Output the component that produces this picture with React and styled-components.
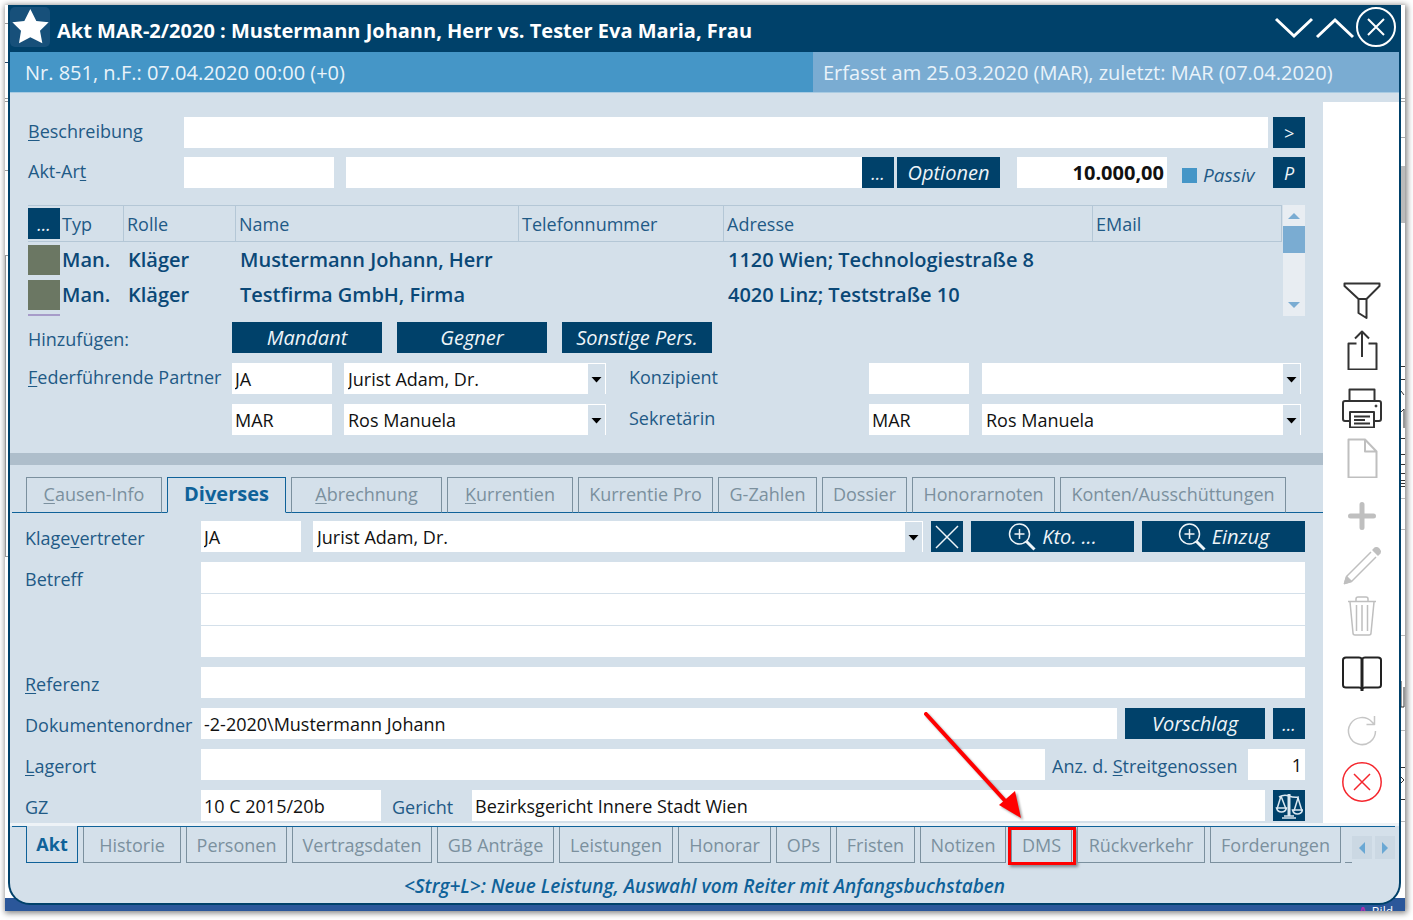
import React from "react";
import styled, { createGlobalStyle, css } from "styled-components";

const navy = "#00416a";
const panel = "#d4e0ea";
const blue = "#0f6299";
const text = "#1f5a86";
const muted = "#7b909e";

const GlobalStyle = createGlobalStyle`
    * {
        box-sizing: border-box;
    }
    body {
        margin: 0;
        background: #fff;
        font-family: "Open Sans", "Noto Sans", sans-serif;
        font-size: 18px;
        color: ${text};
    }
    button, input, select {
        font: inherit;
        margin: 0;
        border: 0;
        border-radius: 0;
        outline: 0;
    }
    u {
        text-underline-offset: 2px;
        text-decoration-thickness: 1px;
    }
`;

/* Desktop and window frame */
const Desktop = styled.div`
    padding: 5px 8px 9px 5px;
`;
const Sheet = styled.div`
    position: relative;
    padding: 0 4px 0 3px;
    background: linear-gradient(to top, #2b579a 13px, #fff 13px);
    box-shadow: 1px 1px 6px 1px rgba(0, 0, 0, 0.5);
`;
const EdgeArt = styled.svg`
    position: absolute;
    top: 0;
    right: 0;
`;
const EdgeArtLeft = styled(EdgeArt)`
    right: auto;
    left: 0;
`;
const Taskbar = styled.div`
    display: flex;
    justify-content: flex-end;
    gap: 5px;
    height: 6px;
    padding-right: 8px;
    overflow: hidden;
    font-size: 12px;
    line-height: 14px;
    color: #fff;
    b {
        color: #b02fb0;
    }
`;
const Window = styled.main`
    position: relative;
    border: 2px solid ${navy};
    border-top: 0;
    border-radius: 0 0 22px 22px;
    background: ${panel};
`;
const TitleBar = styled.header`
    display: flex;
    align-items: center;
    height: 47px;
    padding-right: 3px;
    background: ${navy};
`;
const StarTile = styled.div`
    display: flex;
    width: 40px;
    height: 40px;
    margin-bottom: 3px;
    border-radius: 5px;
    background: #17507a;
`;
const Title = styled.h1`
    flex: 1;
    margin: 0;
    padding: 4px 0 0 7px;
    font-size: 20px;
    font-weight: 700;
    line-height: 26px;
    color: #fff;
`;
const TitleButton = styled.button`
    display: flex;
    padding: 0;
    margin-bottom: 3px;
    background: none;
`;
const InfoBar = styled.div`
    display: flex;
    height: 41px;
    line-height: 42px;
    font-size: 20px;
    color: #e9f3fa;
    border-bottom: 1px solid #a9cbe2;
`;
const InfoLeft = styled.div`
    flex: 1;
    padding-left: 15px;
    background: #4596c7;
`;
const InfoRight = styled.div`
    width: 586px;
    padding-left: 10px;
    background: #7aacd2;
`;
const Body = styled.div`
    display: flex;
    border-bottom: 3px solid #eef3f7;
`;
const Content = styled.div`
    flex: 1;
    min-width: 0;
    padding-bottom: 2px;
`;

/* Form parts */
const TopForm = styled.section`
    padding: 24px 18px 18px 18px;
`;
const Fields = styled.div`
    display: flex;
    flex-direction: column;
    gap: ${p => p.$gap || 9}px;
`;
const Row = styled.div`
    display: flex;
    align-items: ${p => (p.$top ? "flex-start" : "center")};
    height: ${p => (p.$top ? "auto" : "31px")};
`;
const Label = styled.label`
    flex: none;
    width: ${p => (p.$w ? p.$w + "px" : "auto")};
    padding-bottom: ${p => (p.$low ? 0 : 3)}px;
    padding-top: ${p => (p.$low ? 3 : 0)}px;
    line-height: 28px;
    white-space: nowrap;
`;
const Indent = styled.span`
    display: inline-block;
    width: ${p => p.$w}px;
`;
const EndSpace = styled.span`
    width: 4px;
`;
const Field = styled.input`
    flex: ${p => (p.$w ? "none" : "1")};
    min-width: 0;
    width: ${p => (p.$w ? p.$w + "px" : "auto")};
    height: 31px;
    margin-left: ${p => p.$ml || 0}px;
    padding: 0 3px;
    background: #fff;
    color: #111;
    text-align: ${p => p.$align || "left"};
    font-weight: ${p => (p.$bold ? 700 : 400)};
    font-size: ${p => (p.$bold ? 20 : 18)}px;
`;
const Lines = styled.div`
    flex: 1;
    display: flex;
    flex-direction: column;
    gap: 1px;
    ${Field} {
        flex: none;
        width: 100%;
    }
`;
const Button = styled.button`
    display: flex;
    flex: none;
    align-items: center;
    justify-content: center;
    gap: 6px;
    width: ${p => p.$w || 32}px;
    height: 31px;
    margin-left: ${p => p.$ml || 0}px;
    padding: 0;
    background: ${navy};
    color: #eef4f8;
    font-size: ${p => (p.$w ? 20 : 18)}px;
    font-style: italic;
    line-height: 28px;
`;
const CheckLabel = styled.label`
    display: flex;
    align-items: center;
    width: 106px;
    padding: 5px 0 0 15px;
    font-size: 19px;
    font-style: italic;
    input {
        appearance: none;
        width: 15px;
        height: 15px;
        margin-right: 6px;
        background: #4596c7;
    }
`;
const SelectWrap = styled.div`
    position: relative;
    display: flex;
    flex: ${p => (p.$w ? "none" : "1")};
    width: ${p => (p.$w ? p.$w + "px" : "auto")};
    height: 31px;
    margin-left: ${p => p.$ml || 0}px;
    background: #fff;
    select {
        appearance: none;
        flex: 1;
        min-width: 0;
        padding: 0 20px 0 4px;
        background: none;
        color: #111;
    }
    svg {
        position: absolute;
        top: 1px;
        right: 1px;
        background: ${panel};
        pointer-events: none;
    }
`;

/* Persons table */
const TableArea = styled.div`
    display: flex;
    align-items: flex-start;
    justify-content: space-between;
    height: 111px;
    margin: 17px 0 6px;
    overflow: hidden;
`;
const Table = styled.table`
    flex: 1;
    table-layout: fixed;
    border-collapse: separate;
    border-spacing: 0;
    th {
        height: 37px;
        padding: 0 0 0 3px;
        border: 1px solid #b4c7d6;
        border-left-width: 0;
        font-weight: 400;
        text-align: left;
        line-height: 24px;
    }
    th:first-child {
        padding: 0;
    }
    td {
        height: 35px;
        padding: 0 0 0 4px;
        font-size: 20px;
        font-weight: 600;
        color: #0a4877;
        white-space: nowrap;
        line-height: 24px;
    }
    td:first-child {
        padding: 0;
    }
    tr:last-child td {
        padding-top: 2px;
        vertical-align: top;
    }
`;
const TypeCell = styled.div`
    display: flex;
    align-items: center;
    gap: 2px;
`;
const Swatch = styled.span`
    flex: none;
    width: 32px;
    height: 30px;
    background: #6b7763;
`;
const NextRow = styled.div`
    width: 32px;
    height: 2px;
    background: #a79cc9;
`;
const Scroll = styled.div`
    display: flex;
    flex-direction: column;
    width: 22px;
    height: 111px;
    margin-left: 1px;
    background: #e8edf2;
`;
const ScrollButton = styled.button`
    display: flex;
    height: 21px;
    padding: 0;
    background: none;
`;
const Thumb = styled.div`
    height: 27px;
    margin-bottom: auto;
    background: #7aacd2;
`;
const Splitter = styled.div`
    height: 12px;
    background: #aebecb;
`;

/* Tabs */
const tabLine = css`
    content: "";
    height: 1px;
    background: ${blue};
`;
const UpperTabs = styled.nav`
    display: flex;
    align-items: flex-end;
    margin: 12px 0 0 2px;
    &::before {
        ${tabLine}
        width: 14px;
    }
    &::after {
        ${tabLine}
        flex: 1;
    }
`;
const UpperTab = styled.button`
    flex: none;
    width: ${p => p.$w}px;
    height: 36px;
    padding: 0 0 2px;
    background: none;
    border: 1px solid ${p => (p.$active ? blue : muted)};
    border-bottom-color: ${p => (p.$active ? "transparent" : blue)};
    color: ${p => (p.$active ? blue : muted)};
    font-size: ${p => (p.$active ? 20 : 18)}px;
    font-weight: ${p => (p.$active ? 700 : 400)};
    line-height: 30px;
    white-space: nowrap;
`;
const TabGap = styled.span`
    width: 5px;
    height: 1px;
    background: ${blue};
`;
const Details = styled.section`
    padding: 8px 18px 0 15px;
`;
const LowerTabs = styled.nav`
    display: flex;
    height: 38px;
    margin: 0 4px 0 2px;
    padding-left: 14px;
    gap: 5px;
    border-top: 1px solid ${blue};
`;
const LowerTab = styled.button`
    position: relative;
    flex: none;
    width: ${p => p.$w}px;
    height: ${p => (p.$active ? 37 : 36)}px;
    margin-top: ${p => (p.$active ? -1 : 0)}px;
    padding: 0;
    background: ${panel};
    border: 1px solid ${p => (p.$active ? blue : muted)};
    border-top: 0;
    color: ${p => (p.$active ? blue : muted)};
    font-weight: ${p => (p.$active ? 700 : 400)};
    line-height: 30px;
    white-space: nowrap;
`;
const NextTab = styled.span`
    flex: 1;
    height: 36px;
    margin-left: -1px;
    border-bottom: 1px solid ${muted};
`;
const TabScroll = styled.button`
    display: flex;
    width: 20px;
    height: 23px;
    margin-top: 9px;
    margin-left: ${p => (p.$first ? -5 : -2)}px;
    padding: 0;
    background: #cbd8e3;
`;
const Hint = styled.footer`
    height: 39px;
    padding-top: 8px;
    text-align: center;
    font-style: italic;
    font-weight: 600;
    font-size: 19px;
    line-height: 28px;
    color: ${blue};
`;
const Marker = styled.span`
    position: absolute;
    inset: 0 -5px -3px -4px;
    border: 3px solid #f00;
    box-shadow: 2px 2px 3px rgba(0, 0, 0, 0.4);
    pointer-events: none;
`;
const Arrow = styled.svg`
    position: absolute;
    right: 45px;
    bottom: 37px;
    pointer-events: none;
    filter: drop-shadow(2px 2px 1px rgba(0, 0, 0, 0.35));
`;

/* Toolbar on the right */
const Toolbar = styled.aside`
    display: flex;
    flex-direction: column;
    justify-content: flex-end;
    gap: 8px;
    width: 76px;
    margin-top: 9px;
    padding: 0 0 16px 2px;
    background: #fff;
`;
const Tool = styled.button`
    display: flex;
    align-items: center;
    justify-content: center;
    width: 100%;
    height: 50px;
    padding: 0;
    background: none;
    color: ${p => p.$color || "#333"};
`;

const Icon = ({ size = 40, width = 2, children }) => (
    <svg width={size} height={size} viewBox="0 0 40 40" fill="none" stroke="currentColor"
        strokeWidth={width} strokeLinejoin="round" aria-hidden="true">
        {children}
    </svg>
);

const grey = "#bfbfbf";
const tools = [
    [
        { name: "Filter", icon: <path d="M2.5 3.5h35v2.5L24.500 19v19l-8-5V19L2.500 6zM16.500 19h8" /> },
        { name: "Exportieren", icon: <path d="M14.500 13.500h-8v26h28v-26h-8M20 27V2M13 8.500l7-7 7 7" /> }
    ],
    [
        {
            name: "Drucken", icon: <>
                <path d="M7.500 13V1.500h25V13M8 33H3a2 2 0 0 1-2-2V15a2 2 0 0 1 2-2h34a2 2 0 0 1 2 2v16a2 2 0 0 1-2 2h-5" />
                <path d="M8 24h24v15.500H8zM12 28.500h16M12 32h11M12 35.500h16" />
                <circle cx="34" cy="18" r="1" fill="currentColor" strokeWidth="1" />
            </>
        },
        { name: "Neues Dokument", color: grey, icon: <path d="M6.500 1.500h16.500l11.500 12v26h-28zM23 1.500v12h11.500" /> }
    ],
    [
        { name: "Hinzufügen", color: grey, width: 5, icon: <path d="M20 8.500v23M8.500 20h23" strokeLinecap="round" /> },
        {
            name: "Bearbeiten", color: grey, width: 1.5, icon: <>
                <path d="M29 6L5 30 2.500 37.500 10 35 34 11" />
                <path d="M31 4l2-2c3-1 6 2 5 5l-2 2zM2.500 37.500l2-7 5 5z" fill="currentColor" />
            </>
        },
        {
            name: "Löschen", color: grey, width: 1.5, icon: <>
                <path d="M6 5.500h28M14 5V3q0-2 2-2h8q2 0 2 2v2M8 6l3 31q0 2 2 2h14q2 0 2-2l3-31" />
                <path d="M14.500 9v26M20 9v26M25.500 9v26" />
            </>
        }
    ],
    [
        {
            name: "Akt öffnen", color: "#222", icon: <>
                <path d="M20 5q-1-1.500-3-1.500H4Q1 3.500 1 6v25q0 2.500 3 2.500h13q2 0 3 1.500 1-1.500 3-1.500h13q3 0 3-2.500V6q0-2.500-3-2.500H23q-2 0-3 1.500z" />
                <path d="M20 5v32" strokeWidth="3" />
            </>
        }
    ],
    [
        { name: "Aktualisieren", color: "#c6c6c6", width: 1.5, icon: <path d="M33.500 19A13.500 13.500 0 1 1 30 10l2.500 2.500M32.500 4v8.500H24.500" /> },
        { name: "Schließen", color: "#f5262d", width: 1.5, icon: <path d="M20 .8a19.200 19.200 0 1 1 0 38.400 19.200 19.200 0 0 1 0-38.400M12 12l16 16M28 12L12 28" /> }
    ]
];

const upperTabs = [
    [136, <><u>C</u>ausen-Info</>],
    [119, <>Di<u>v</u>erses</>],
    [151, <><u>A</u>brechnung</>],
    [126, <><u>K</u>urrentien</>],
    [135, "Kurrentie Pro"],
    [99, "G-Zahlen"],
    [85, "Dossier"],
    [143, "Honorarnoten"],
    [226, "Konten/Ausschüttungen"]
];
const lowerTabs = [
    [52, "Akt"], [98, "Historie"], [101, "Personen"], [140, "Vertragsdaten"],
    [117, "GB Anträge"], [114, "Leistungen"], [93, "Honorar"], [55, "OPs"],
    [79, "Fristen"], [86, "Notizen"], [61, "DMS"], [128, "Rückverkehr"], [131, "Forderungen"]
];
const persons = [
    ["Man.", "Kläger", "Mustermann Johann, Herr", "", "1120 Wien; Technologiestraße 8", ""],
    ["Man.", "Kläger", "Testfirma GmbH, Firma", "", "4020 Linz; Teststraße 10", ""]
];

const Select = ({ w, ml, value, ...rest }) => (
    <SelectWrap $w={w} $ml={ml}>
        <select defaultValue={value} {...rest}>
            <option>{value}</option>
        </select>
        <svg width="17" height="30" viewBox="0 0 17 30" aria-hidden="true">
            <path d="M3.500 13h10l-5 5.500z" fill="#000" />
        </svg>
    </SelectWrap>
);

const Lens = () => (
    <svg width="28" height="29" viewBox="0 0 28 29" fill="none" stroke="#eef4f8" aria-hidden="true">
        <circle cx="11.500" cy="12" r="10" strokeWidth="1.500" />
        <path d="M11.500 7v10M6.500 12h10" strokeWidth="1.500" />
        <path d="M18.500 19.500l8 8" strokeWidth="3" />
    </svg>
);

const Scales = () => (
    <svg width="28" height="28" viewBox="0 0 28 28" fill="none" stroke="#dbe8f1" strokeWidth="1.500" aria-hidden="true">
        <path d="M4 5q5-3 10-1 5 2 10 1M6 4L2 17M6 4l5 13M23 6l-4 13M23 6l4 13M7 26h14M9 24h10" />
        <path d="M1.500 16h10q-1 4-5 4t-5-4zM17.500 18h10q-1 4-5 4t-5-4z" />
        <path d="M14 2v22" strokeWidth="3" />
    </svg>
);

const App = function App() {
    return <Desktop>
        <GlobalStyle />
        <Sheet>
            <EdgeArtLeft width="3" height="620" fill="none" stroke="#999" aria-hidden="true">
                <path d="M0 18.500h3M0 93.500h3M0 96.500h3M0 165.500h3M0 250.500h3M.5 250v302M0 551.500h3" />
                <path d="M0 57.500h3" stroke="#246" />
            </EdgeArtLeft>
            <EdgeArt width="4" height="880" fill="none" stroke="#333" aria-hidden="true">
                <path d="M0 93.500h4M0 96.500h4M0 132.500h4" stroke="#aaa" />
                <path d="M0 161h4v57H0z" fill="#bbb" stroke="none" />
                <path d="M0 361.500h4M0 374.500h4M0 386l3 4M0 407l3-3v19M0 433.500h4M0 449.500h4M0 459.500h4M0 468.500h4M0 475.500h4M0 478.500h4M0 481.500h4M0 676v26h3v-20M0 762.500h4M0 778l3-3-3-3M0 794.500h4" />
                <path d="M0 493.500h4M0 524.500h4M0 630.500h4M0 725.500h4M0 816.500h4" stroke="#bbb" />
            </EdgeArt>
            <Window>
                <TitleBar>
                    <StarTile>
                        <svg width="40" height="40" viewBox="0 0 120 120" aria-hidden="true">
                            <path d="M61 6l18 36 37 4-26 25 7 38-36-18-34 18 6-38L7 46l36-4z" fill="#fff" />
                        </svg>
                    </StarTile>
                    <Title>Akt MAR-2/2020 : Mustermann Johann, Herr vs. Tester Eva Maria, Frau</Title>
                    <TitleButton aria-label="Nach unten">
                        <svg width="41" height="40" fill="none" stroke="#fff" strokeWidth="3"><path d="M2 12l18 17 18-17" /></svg>
                    </TitleButton>
                    <TitleButton aria-label="Nach oben">
                        <svg width="41" height="40" fill="none" stroke="#fff" strokeWidth="3"><path d="M2 30l18-17 18 17" /></svg>
                    </TitleButton>
                    <TitleButton aria-label="Schließen">
                        <svg width="40" height="40" fill="none" stroke="#fff" strokeWidth="2">
                            <circle cx="20" cy="20" r="19" />
                            <path d="M12 12l16 16M28 12L12 28" />
                        </svg>
                    </TitleButton>
                </TitleBar>
                <InfoBar>
                    <InfoLeft>Nr. 851, n.F.: 07.04.2020 00:00 (+0)</InfoLeft>
                    <InfoRight>Erfasst am 25.03.2020 (MAR), zuletzt: MAR (07.04.2020)</InfoRight>
                </InfoBar>
                <Body>
                    <Content>
                        <TopForm>
                            <Fields>
                                <Row>
                                    <Label htmlFor="desc" $w={156}><u>B</u>eschreibung</Label>
                                    <Field id="desc" />
                                    <Button $ml={5}>&gt;</Button>
                                </Row>
                                <Row>
                                    <Label htmlFor="kind" $w={156}>Akt-Ar<u>t</u></Label>
                                    <Field id="kind" $w={150} />
                                    <Field aria-label="Akt-Art Bezeichnung" $ml={12} />
                                    <Button>...</Button>
                                    <Button $w={103} $ml={3}>Optionen</Button>
                                    <Field aria-label="Streitwert" $w={150} $ml={17} $align="right" $bold defaultValue="10.000,00" />
                                    <CheckLabel><input type="checkbox" />Passiv</CheckLabel>
                                    <Button>P</Button>
                                </Row>
                            </Fields>
                            <TableArea>
                                <Table>
                                    <colgroup>
                                        <col style={{ width: 96 }} />
                                        <col style={{ width: 112 }} />
                                        <col style={{ width: 283 }} />
                                        <col style={{ width: 205 }} />
                                        <col />
                                        <col style={{ width: 189 }} />
                                    </colgroup>
                                    <thead>
                                        <tr>
                                            <th><TypeCell><Button aria-label="Spalten">...</Button>Typ</TypeCell></th>
                                            <th>Rolle</th>
                                            <th>Name</th>
                                            <th>Telefonnummer</th>
                                            <th>Adresse</th>
                                            <th>EMail</th>
                                        </tr>
                                    </thead>
                                    <tbody>
                                        {persons.map((row, i) => <tr key={i}>
                                            {row.map((cell, j) => <td key={j}>
                                                {j === 0 ? <TypeCell><Swatch />{cell}</TypeCell> : cell}
                                            </td>)}
                                        </tr>)}
                                        <tr><td colSpan="6"><NextRow /></td></tr>
                                    </tbody>
                                </Table>
                                <Scroll>
                                    <ScrollButton aria-label="Hinauf">
                                        <svg width="22" height="21"><path d="M5 14l6-6 6 6z" fill="#7aacd2" /></svg>
                                    </ScrollButton>
                                    <Thumb />
                                    <ScrollButton aria-label="Hinunter">
                                        <svg width="22" height="21"><path d="M5 7l6 6 6-6z" fill="#7aacd2" /></svg>
                                    </ScrollButton>
                                </Scroll>
                            </TableArea>
                            <Fields $gap={10}>
                                <Row>
                                    <Label as="span" $w={204} $low>Hinzufügen:</Label>
                                    <Button $w={150}>Mandant</Button>
                                    <Button $w={150} $ml={15}>Gegner</Button>
                                    <Button $w={150} $ml={15}>Sonstige Pers.</Button>
                                </Row>
                                <Row>
                                    <Label htmlFor="partner" $w={204}><u>F</u>ederführende Partner</Label>
                                    <Field id="partner" $w={100} defaultValue="JA" />
                                    <Select w={262} ml={12} value="Jurist Adam, Dr." aria-label="Partner Name" />
                                    <Label htmlFor="assoc" $w={263}><Indent $w={23} />Konzipient</Label>
                                    <Field id="assoc" $w={100} />
                                    <Select ml={13} value="" aria-label="Konzipient Name" />
                                    <EndSpace />
                                </Row>
                                <Row>
                                    <Label as="span" $w={204} />
                                    <Field aria-label="Partner 2" $w={100} defaultValue="MAR" />
                                    <Select w={262} ml={12} value="Ros Manuela" aria-label="Partner 2 Name" />
                                    <Label htmlFor="secretary" $w={263}><Indent $w={23} />Sekretärin</Label>
                                    <Field id="secretary" $w={100} defaultValue="MAR" />
                                    <Select ml={13} value="Ros Manuela" aria-label="Sekretärin Name" />
                                    <EndSpace />
                                </Row>
                            </Fields>
                        </TopForm>
                        <Splitter />
                        <UpperTabs>
                            {upperTabs.map(([w, label], i) => <React.Fragment key={i}>
                                {i > 0 && <TabGap />}
                                <UpperTab $w={w} $active={i === 1}>{label}</UpperTab>
                            </React.Fragment>)}
                        </UpperTabs>
                        <Details>
                            <Fields $gap={10}>
                                <Row>
                                    <Label htmlFor="counsel" $w={176} $low>Klage<u>v</u>ertreter</Label>
                                    <Field id="counsel" $w={100} defaultValue="JA" />
                                    <Select ml={12} value="Jurist Adam, Dr." aria-label="Klagevertreter Name" />
                                    <Button $ml={8} aria-label="Entfernen">
                                        <svg width="26" height="26" fill="none" stroke="#eef4f8" strokeWidth="1.500">
                                            <path d="M2 2l22 22M24 2L2 24" />
                                        </svg>
                                    </Button>
                                    <Button $w={163} $ml={8}><Lens />Kto. ...</Button>
                                    <Button $w={163} $ml={8}><Lens />Einzug</Button>
                                </Row>
                                <Row $top>
                                    <Label htmlFor="subject" $w={176} $low>Betreff</Label>
                                    <Lines>
                                        <Field id="subject" />
                                        <Field aria-label="Betreff Zeile 2" />
                                        <Field aria-label="Betreff Zeile 3" />
                                    </Lines>
                                </Row>
                                <Row>
                                    <Label htmlFor="ref" $w={176} $low><u>R</u>eferenz</Label>
                                    <Field id="ref" />
                                </Row>
                                <Row>
                                    <Label htmlFor="folder" $w={176} $low>Dokumentenordner</Label>
                                    <Field id="folder" defaultValue="-2-2020\Mustermann Johann" />
                                    <Button $w={140} $ml={8}>Vorschlag</Button>
                                    <Button $ml={8}>...</Button>
                                </Row>
                                <Row>
                                    <Label htmlFor="store" $w={176} $low><u>L</u>agerort</Label>
                                    <Field id="store" />
                                    <Label htmlFor="count" $w={203} $low><Indent $w={7} />Anz. d. <u>S</u>treitgenossen</Label>
                                    <Field id="count" $w={57} $align="right" defaultValue="1" />
                                </Row>
                                <Row>
                                    <Label htmlFor="gz" $w={176} $low>GZ</Label>
                                    <Field id="gz" $w={180} defaultValue="10 C 2015/20b" />
                                    <Label htmlFor="court" $w={91} $low><Indent $w={11} />Gericht</Label>
                                    <Field id="court" defaultValue="Bezirksgericht Innere Stadt Wien" />
                                    <Button $ml={8} aria-label="Gerichte"><Scales /></Button>
                                </Row>
                            </Fields>
                        </Details>
                    </Content>
                    <Toolbar>
                        {tools.map((group, i) => <div key={i}>
                            {group.map(t => <Tool key={t.name} $color={t.color} aria-label={t.name}>
                                <Icon width={t.width}>{t.icon}</Icon>
                            </Tool>)}
                        </div>)}
                    </Toolbar>
                </Body>
                <LowerTabs>
                    {lowerTabs.map(([w, label]) => <LowerTab key={label} $w={w} $active={label === "Akt"}>
                        {label}
                        {label === "DMS" && <>
                            <Marker />
                            <Arrow width="104" height="116" viewBox="0 0 104 116" aria-hidden="true">
                                <path d="M4 5l82 90" stroke="#f00" strokeWidth="4" strokeLinecap="round" />
                                <path d="M99 109L77 96l16-14z" fill="#f00" />
                            </Arrow>
                        </>}
                    </LowerTab>)}
                    <NextTab />
                    <TabScroll $first aria-label="Reiter links">
                        <svg width="20" height="23"><path d="M13 6v12l-6-6z" fill="#6aa8d4" /></svg>
                    </TabScroll>
                    <TabScroll aria-label="Reiter rechts">
                        <svg width="20" height="23"><path d="M7 6v12l6-6z" fill="#6aa8d4" /></svg>
                    </TabScroll>
                </LowerTabs>
                <Hint>&lt;Strg+L&gt;: Neue Leistung, Auswahl vom Reiter mit Anfangsbuchstaben</Hint>
            </Window>
            <Taskbar><b>A</b><span>Bild</span></Taskbar>
        </Sheet>
    </Desktop>;
};

export default App;
